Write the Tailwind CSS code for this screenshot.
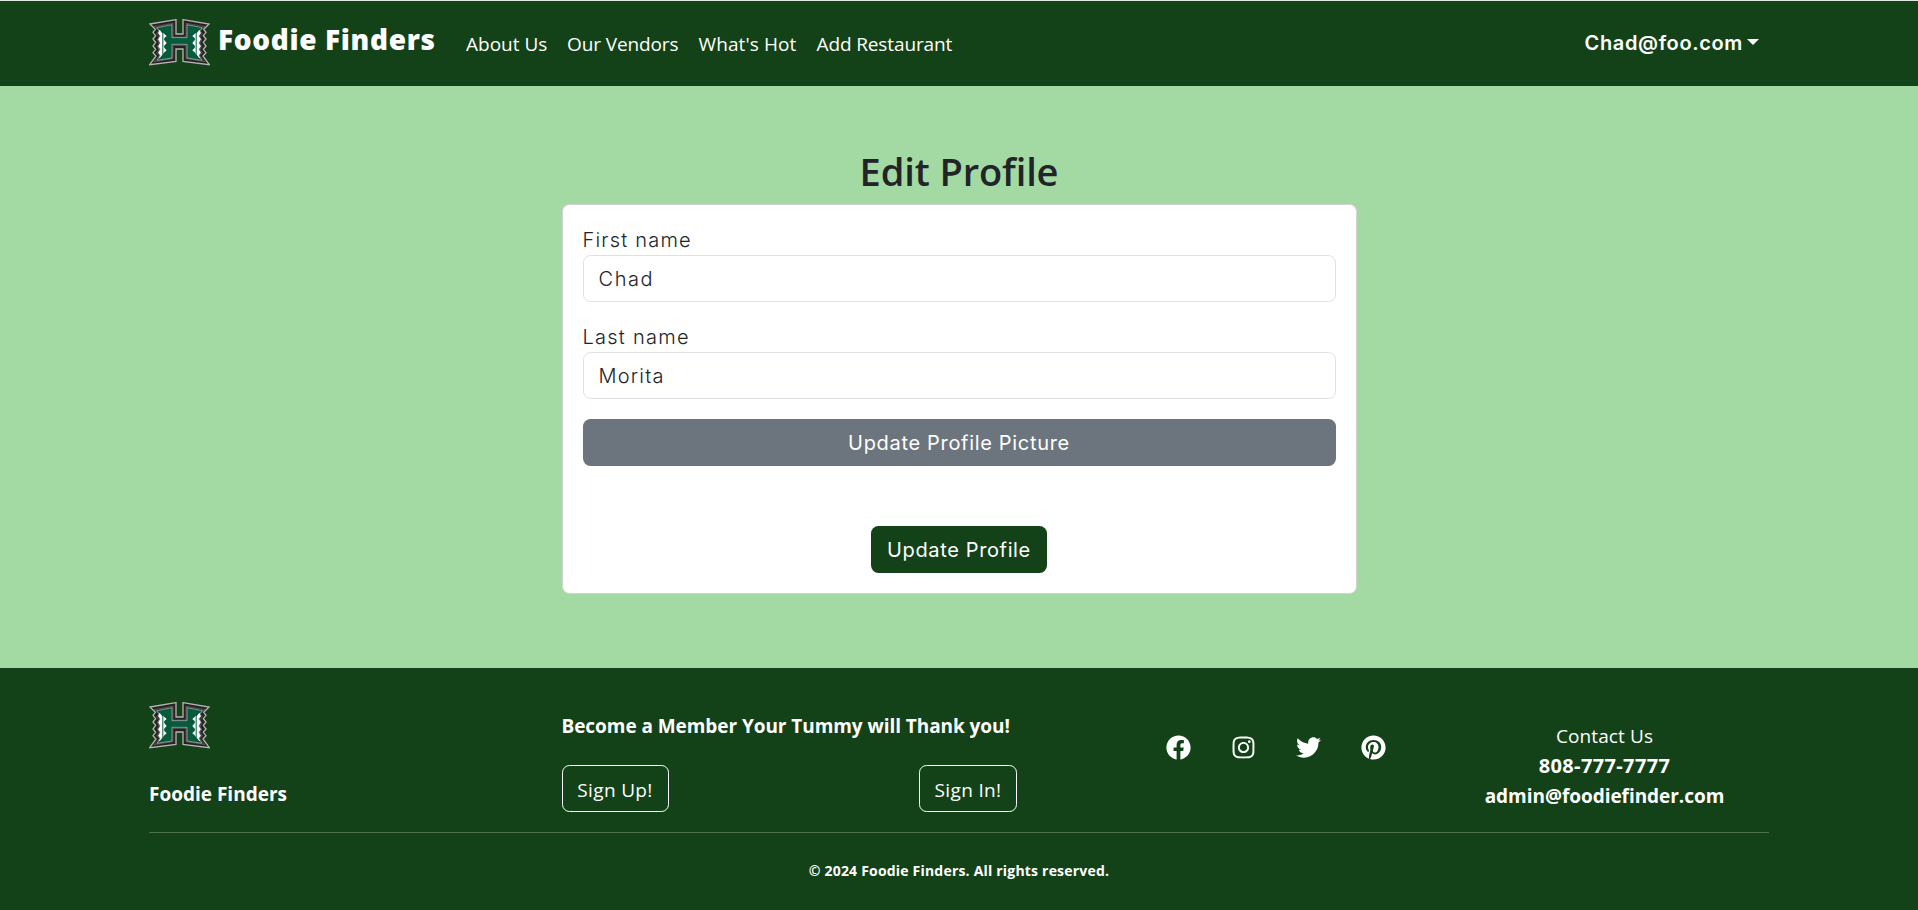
<!DOCTYPE html>
<html lang="en">
<head>
<meta charset="utf-8">
<title>Foodie Finders</title>
<script src="https://cdn.jsdelivr.net/npm/@tailwindcss/browser@4"></script>
</head>
<body class="flex h-[910px] flex-col overflow-hidden bg-[#a3d9a3] font-['Open_Sans','Noto_Sans',sans-serif] text-[19px] leading-[30px] text-[#212529]">
<svg class="hidden">
  <symbol id="logo" viewBox="0 0 183 141">
    <path d="M3 15 81 2V45H102V2L180 15 164 31 171 40 163 50 171 60 163 70 171 81 163 91 171 101 162 111 181 137 102 127V90H81V127L2 137 21 111 12 101 20 91 12 81 20 70 12 60 20 50 12 40 19 31Z" fill="#262223" stroke="#b5b3b4" stroke-width="4"/>
    <path d="M15 23 72 13V54H111V13L168 23 153 35 160 44 153 53 158 62 153 72 158 82 153 92 160 101 152 110 168 128 111 119V79H72V119L15 128 31 110 23 101 30 92 25 82 30 72 25 62 30 53 23 44 30 35Z" fill="none" stroke="#b5b3b4" stroke-width="1"/>
    <path d="M23 26 69 17V56H114V17L160 26 150 38V111L159 124 114 117V76H69V117L24 124 33 111V38Z" fill="#065b3c" stroke="#f0f3f0" stroke-width="1.5"/>
    <path d="M32 34 39 43V107L31 117 35 109 28 101 35 91 28 82 35 72 28 61 35 51 28 43ZM151 34 144 43V107L152 117 148 109 155 101 148 91 155 82 148 72 155 61 148 51 155 43Z" fill="#fff" stroke="#fff" stroke-width="2"/>
    <path d="M43 41 46 45 53 51 46 57 45 62 53 72 45 81 46 87 53 94 46 100 43 105ZM140 41 137 45 130 51 137 57 138 62 130 72 138 81 137 87 130 94 137 100 140 105Z" fill="#fff"/>
  </symbol>
</svg>

<header class="h-[86px] shrink-0 border-t border-[#dfe6df] bg-[#144218] text-white">
  <nav class="mx-auto flex w-[1620px] items-start">
    <svg class="mt-[18px] h-[47px] w-[61px] shrink-0"><use href="#logo"/></svg>
    <a class="mt-[18px] ml-[8px] w-[236px] text-[28px] leading-10 font-extrabold tracking-[0.66px] whitespace-nowrap">Foodie Finders</a>
    <div class="mt-[28px] ml-[12px] flex whitespace-nowrap">
      <a class="w-[101px]">About Us</a>
      <a class="w-[131.5px] tracking-[-0.11px]">Our Vendors</a>
      <a class="w-[118px] tracking-[0.1px]">What's Hot</a>
      <a class="tracking-[-0.12px]">Add Restaurant</a>
    </div>
    <div class="mt-[27px] mr-[10px] ml-auto flex items-start font-['Inter',sans-serif] text-[20px] font-semibold tracking-[0.64px]">Chad@foo.com
      <svg class="mt-[11px] ml-[4px] h-[6px] w-[12px]" viewBox="0 0 12 6"><path d="M0 0H12L6 6Z" fill="#fff"/></svg>
    </div>
  </nav>
</header>

<main class="h-[582px] shrink-0 pt-[61px]">
  <h1 class="mb-[9px] h-12 text-center text-[38px] leading-[48px] font-semibold tracking-[-0.11px]">Edit Profile</h1>
  <form class="mx-auto flex h-[390px] w-[795px] flex-col rounded-[7.5px] border border-[#d2d2d2] bg-white p-5 font-['Inter',sans-serif] text-[20px] font-light">
    <label class="tracking-[1.2px]">First name</label>
    <div class="mb-5 h-[47px] rounded-[7.5px] border border-[#dee2e6] px-[15px] py-[7.5px] tracking-[1.6px]">Chad</div>
    <label class="tracking-[1.25px]">Last name</label>
    <div class="mb-5 h-[47px] rounded-[7.5px] border border-[#dee2e6] px-[15px] py-[7.5px] tracking-[1.2px]">Morita</div>
    <button type="button" class="mb-[60px] h-[47px] rounded-[7.5px] bg-[#6c757d] font-normal tracking-[0.68px] text-white">Update Profile Picture</button>
    <button type="button" class="mx-auto h-[47px] w-[176px] rounded-[7.5px] bg-[#144218] font-normal tracking-[0.63px] text-white">Update Profile</button>
  </form>
</main>

<footer class="h-[242px] shrink-0 bg-[#144218] text-white">
  <div class="mx-auto flex h-[164px] w-[1620px] items-start whitespace-nowrap">
    <div class="w-[412.5px] pt-[33.5px]">
      <svg class="h-[47px] w-[61px]"><use href="#logo"/></svg>
      <p class="mt-[30px] font-bold">Foodie Finders</p>
    </div>
    <div class="w-[455.5px] pt-[43px]">
      <p class="font-bold tracking-[-0.06px]">Become a Member Your Tummy will Thank you!</p>
      <div class="mt-6 flex justify-between">
        <button class="h-[47px] w-[107px] rounded-[7.5px] border border-white pt-[2px] tracking-[0.34px]">Sign Up!</button>
        <button class="h-[47px] w-[98px] rounded-[7.5px] border border-white pt-[2px] tracking-[0.34px]">Sign In!</button>
      </div>
    </div>
    <div class="ml-[149px] flex gap-10 pt-[67px]">
      <svg class="size-[25px]" viewBox="0 0 512 512" fill="#fff"><path d="M504 256C504 119 393 8 256 8S8 119 8 256c0 123.78 90.69 226.38 209.25 245V327.69h-63V256h63v-54.64c0-62.15 37-96.48 93.67-96.48 27.14 0 55.52 4.84 55.52 4.84v61h-31.28c-30.8 0-40.41 19.12-40.41 38.73V256h68.78l-11 71.69h-57.78V501C413.31 482.38 504 379.78 504 256z"/></svg>
      <svg class="size-[25px]" viewBox="0 0 448 512" fill="#fff"><path d="M224.1 141c-63.6 0-114.9 51.3-114.9 114.9s51.3 114.9 114.9 114.9S339 319.5 339 255.9 287.7 141 224.1 141zm0 189.6c-41.1 0-74.7-33.5-74.7-74.7s33.5-74.7 74.7-74.7 74.7 33.5 74.7 74.7-33.6 74.7-74.7 74.7zm146.4-194.3c0 14.9-12 26.8-26.8 26.8-14.9 0-26.8-12-26.8-26.8s12-26.8 26.8-26.8 26.8 12 26.8 26.8zm76.1 27.2c-1.7-35.9-9.9-67.7-36.2-93.9-26.2-26.2-58-34.4-93.9-36.2-37-2.1-147.9-2.1-184.9 0-35.8 1.7-67.6 9.9-93.9 36.1s-34.4 58-36.2 93.9c-2.1 37-2.1 147.9 0 184.9 1.7 35.9 9.9 67.7 36.2 93.9s58 34.4 93.9 36.2c37 2.1 147.9 2.1 184.9 0 35.9-1.7 67.7-9.9 93.9-36.2 26.2-26.2 34.4-58 36.2-93.9 2.1-37 2.1-147.8 0-184.8zM398.8 388c-7.8 19.6-22.9 34.7-42.6 42.6-29.5 11.7-99.5 9-132.1 9s-102.7 2.6-132.1-9c-19.6-7.8-34.7-22.9-42.6-42.6-11.7-29.5-9-99.5-9-132.1s-2.6-102.7 9-132.1c7.8-19.6 22.9-34.7 42.6-42.6 29.5-11.7 99.5-9 132.1-9s102.7-2.6 132.1 9c19.6 7.8 34.7 22.9 42.6 42.6 11.7 29.5 9 99.5 9 132.1s2.7 102.7-9 132.1z"/></svg>
      <svg class="size-[25px]" viewBox="0 0 512 512" fill="#fff"><path d="M459.37 151.716c.325 4.548.325 9.097.325 13.645 0 138.72-105.583 298.558-298.558 298.558-59.452 0-114.68-17.219-161.137-47.106 8.447.974 16.568 1.299 25.34 1.299 49.055 0 94.213-16.568 130.274-44.832-46.132-.975-84.792-31.188-98.112-72.772 6.498.974 12.995 1.624 19.818 1.624 9.421 0 18.843-1.3 27.614-3.573-48.081-9.747-84.143-51.98-84.143-102.985v-1.299c13.969 7.797 30.214 12.67 47.431 13.319-28.264-18.843-46.781-51.005-46.781-87.391 0-19.492 5.197-37.36 14.294-52.954 51.655 63.675 129.3 105.258 216.365 109.807-1.624-7.797-2.599-15.918-2.599-24.04 0-57.828 46.782-104.934 104.934-104.934 30.213 0 57.502 12.67 76.67 33.137 23.715-4.548 46.456-13.32 66.599-25.34-7.798 24.366-24.366 44.833-46.132 57.827 21.117-2.273 41.584-8.122 60.426-16.243-14.292 20.791-32.161 39.308-52.628 54.253z"/></svg>
      <svg class="size-[25px]" viewBox="0 0 496 512" fill="#fff"><path d="M496 256c0 137-111 248-248 248-25.6 0-50.2-3.9-73.4-11.1 10.1-16.5 25.2-43.5 30.8-65 3-11.6 15.4-59 15.4-59 8.1 15.4 31.7 28.5 56.8 28.5 74.8 0 128.7-68.8 128.7-154.3 0-81.9-66.9-143.2-152.9-143.2-107 0-163.9 71.8-163.9 150.1 0 36.4 19.4 81.7 50.3 96.1 4.7 2.2 7.2 1.2 8.3-3.3.8-3.4 5-20.3 6.9-28.1.6-2.5.3-4.7-1.7-7.1-10.1-12.5-18.3-35.3-18.3-56.6 0-54.7 41.4-107.6 112-107.6 60.9 0 103.6 41.5 103.6 100.9 0 67.1-33.9 113.6-78 113.6-24.3 0-42.6-20.1-36.7-44.8 7-29.5 20.5-61.3 20.5-82.6 0-19-10.2-34.9-31.4-34.9-24.9 0-44.9 25.7-44.9 60.2 0 22 7.4 36.8 7.4 36.8s-24.5 103.8-29 123.2c-5 21.4-3 51.6-.9 71.2C65.4 450.9 0 361.1 0 256 0 119 111 8 248 8s248 111 248 248z"/></svg>
    </div>
    <div class="ml-auto w-[329px] pt-[53px] text-center">
      <p class="tracking-[0.1px]">Contact Us</p>
      <p class="text-[20px] font-bold tracking-[0.36px]">808-777-7777</p>
      <p class="font-bold tracking-[-0.04px]">admin@foodiefinder.com</p>
    </div>
  </div>
  <div class="mx-auto w-[1620px] border-t border-[#4f714f] pt-[26px] text-center text-[14px] leading-6 font-bold tracking-[0.2px]">© 2024 Foodie Finders. All rights reserved.</div>
</footer>
</body>
</html>
